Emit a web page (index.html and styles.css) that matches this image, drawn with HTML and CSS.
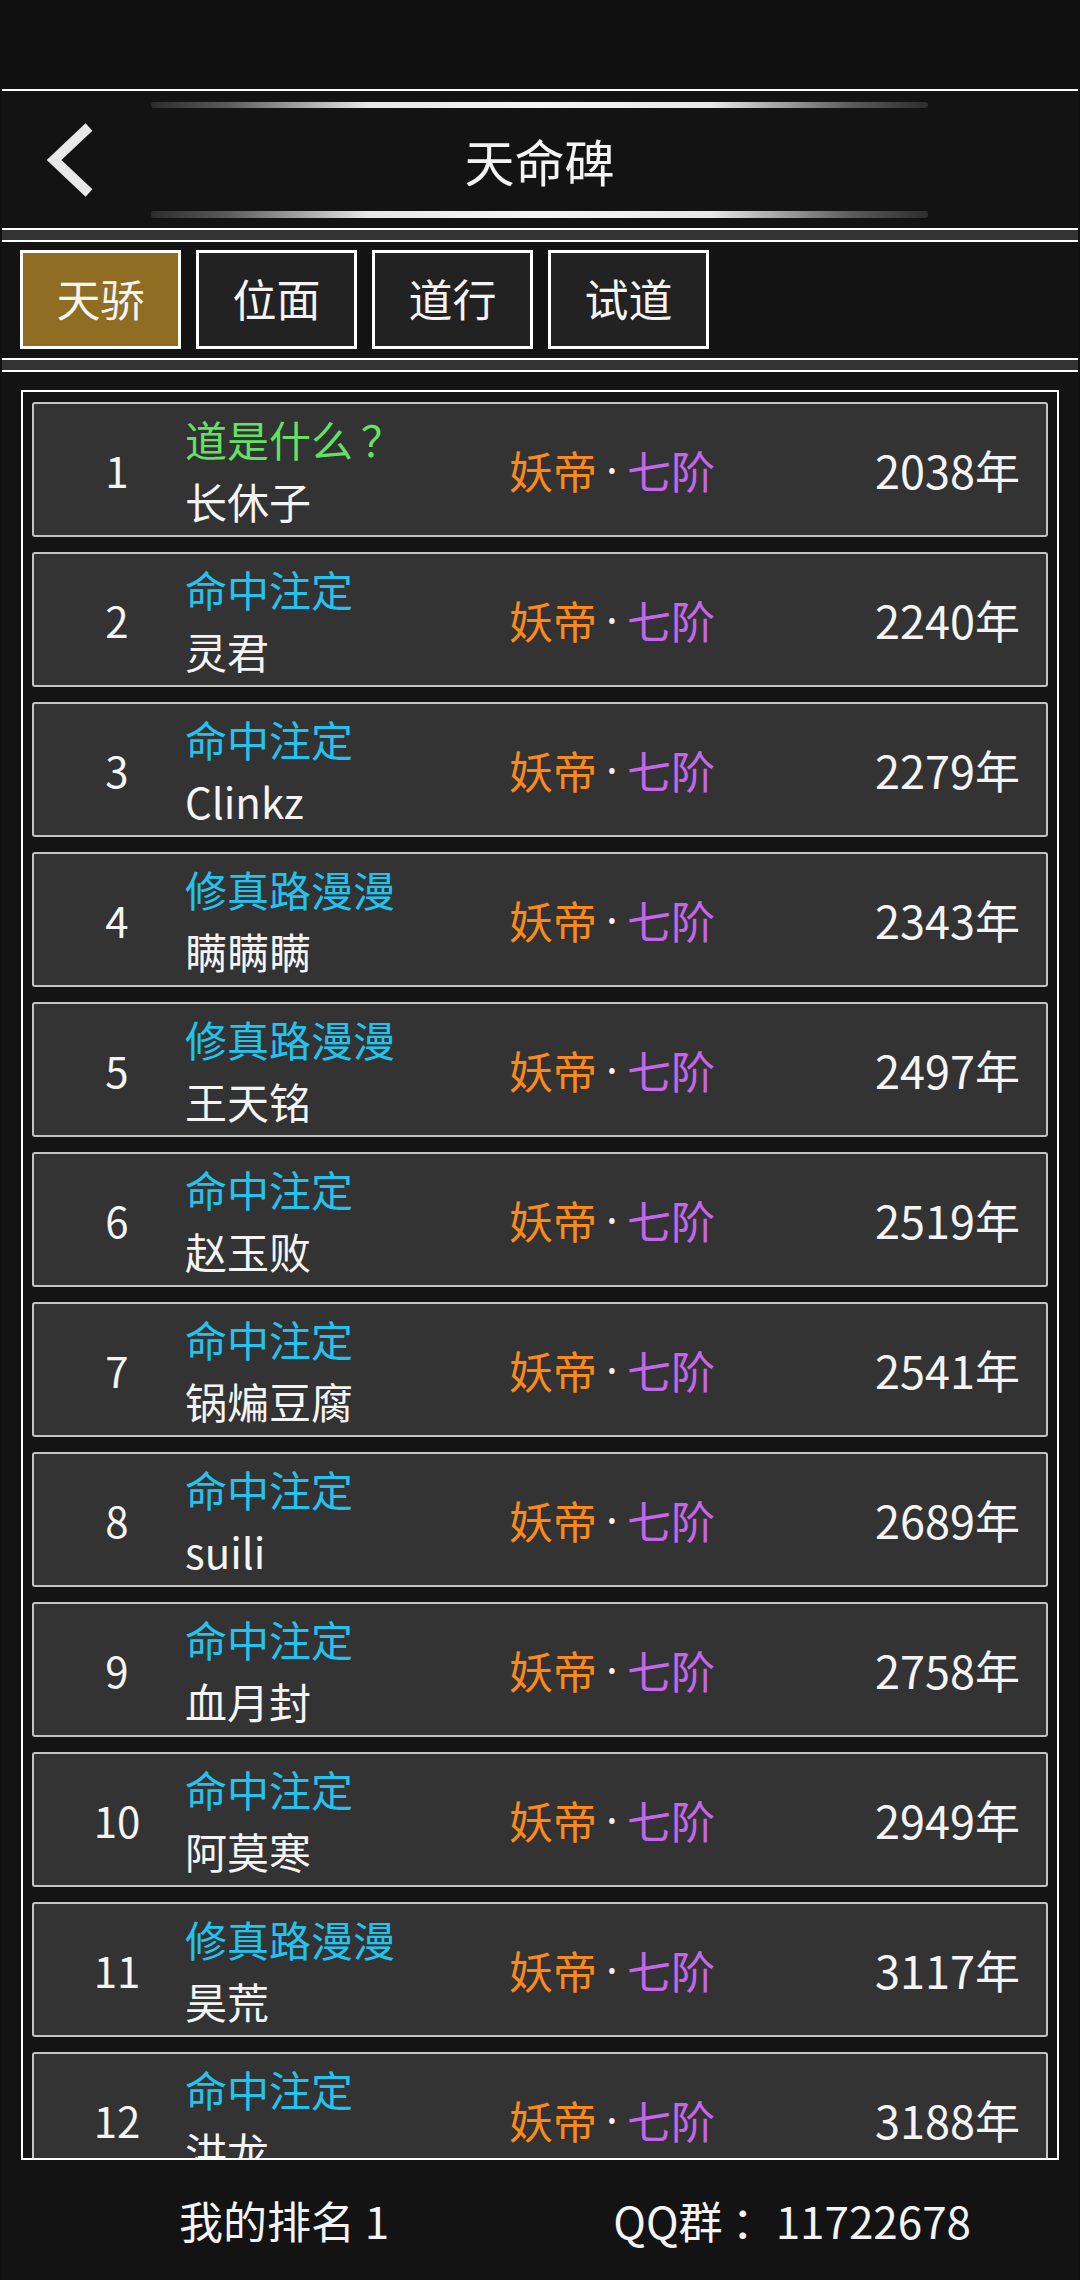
FILE: index.html
```html
<!DOCTYPE html>
<html lang="zh-CN">
<head>
<meta charset="utf-8">
<title>天命碑</title>
<link rel="stylesheet" href="styles.css">
</head>
<body>
<div class="status"></div>
<div class="app">
  <header class="header">
    <div class="back">
      <svg width="60" height="80" viewBox="0 0 60 80">
        <polyline points="49,7 14,40 49,73" fill="none" stroke="#e8e8e8" stroke-width="10" stroke-linecap="butt" stroke-linejoin="miter"/>
      </svg>
    </div>
    <div class="title-col">
      <div class="glow glow-top"></div>
      <div class="title">天命碑</div>
      <div class="glow glow-bottom"></div>
    </div>
    <div></div>
  </header>
  <div class="band"></div>
  <nav class="tabs">
    <div class="tab active">天骄</div>
    <div class="tab">位面</div>
    <div class="tab">道行</div>
    <div class="tab">试道</div>
  </nav>
  <div class="band"></div>
  <main class="main">
    <div class="list">
      <div class="row"><div class="rank">1</div><div class="names"><div class="tag green">道是什么<span class="qmark">？</span></div><div class="name">长休子</div></div><div class="realm"><span class="orange">妖帝</span><span class="dot">·</span><span class="purple">七阶</span></div><div class="year">2038年</div></div>
      <div class="row"><div class="rank">2</div><div class="names"><div class="tag cyan">命中注定</div><div class="name">灵君</div></div><div class="realm"><span class="orange">妖帝</span><span class="dot">·</span><span class="purple">七阶</span></div><div class="year">2240年</div></div>
      <div class="row"><div class="rank">3</div><div class="names"><div class="tag cyan">命中注定</div><div class="name">Clinkz</div></div><div class="realm"><span class="orange">妖帝</span><span class="dot">·</span><span class="purple">七阶</span></div><div class="year">2279年</div></div>
      <div class="row"><div class="rank">4</div><div class="names"><div class="tag cyan">修真路漫漫</div><div class="name">瞒瞒瞒</div></div><div class="realm"><span class="orange">妖帝</span><span class="dot">·</span><span class="purple">七阶</span></div><div class="year">2343年</div></div>
      <div class="row"><div class="rank">5</div><div class="names"><div class="tag cyan">修真路漫漫</div><div class="name">王天铭</div></div><div class="realm"><span class="orange">妖帝</span><span class="dot">·</span><span class="purple">七阶</span></div><div class="year">2497年</div></div>
      <div class="row"><div class="rank">6</div><div class="names"><div class="tag cyan">命中注定</div><div class="name">赵玉败</div></div><div class="realm"><span class="orange">妖帝</span><span class="dot">·</span><span class="purple">七阶</span></div><div class="year">2519年</div></div>
      <div class="row"><div class="rank">7</div><div class="names"><div class="tag cyan">命中注定</div><div class="name">锅煸豆腐</div></div><div class="realm"><span class="orange">妖帝</span><span class="dot">·</span><span class="purple">七阶</span></div><div class="year">2541年</div></div>
      <div class="row"><div class="rank">8</div><div class="names"><div class="tag cyan">命中注定</div><div class="name">suili</div></div><div class="realm"><span class="orange">妖帝</span><span class="dot">·</span><span class="purple">七阶</span></div><div class="year">2689年</div></div>
      <div class="row"><div class="rank">9</div><div class="names"><div class="tag cyan">命中注定</div><div class="name">血月封</div></div><div class="realm"><span class="orange">妖帝</span><span class="dot">·</span><span class="purple">七阶</span></div><div class="year">2758年</div></div>
      <div class="row"><div class="rank">10</div><div class="names"><div class="tag cyan">命中注定</div><div class="name">阿莫寒</div></div><div class="realm"><span class="orange">妖帝</span><span class="dot">·</span><span class="purple">七阶</span></div><div class="year">2949年</div></div>
      <div class="row"><div class="rank">11</div><div class="names"><div class="tag cyan">修真路漫漫</div><div class="name">昊荒</div></div><div class="realm"><span class="orange">妖帝</span><span class="dot">·</span><span class="purple">七阶</span></div><div class="year">3117年</div></div>
      <div class="row"><div class="rank">12</div><div class="names"><div class="tag cyan">命中注定</div><div class="name">洪龙</div></div><div class="realm"><span class="orange">妖帝</span><span class="dot">·</span><span class="purple">七阶</span></div><div class="year">3188年</div></div>
    </div>
    <footer class="footer">
      <div class="my-rank">我的排名 1</div>
      <div class="qq">QQ群<span class="colon">：</span>11722678</div>
    </footer>
  </main>
</div>
</body>
</html>
```

FILE: styles.css
```css
* {
  box-sizing: border-box;
}

html, body {
  margin: 0;
  padding: 0;
  width: 1080px;
  height: 2280px;
  overflow: hidden;
  background: #0f0f0f;
  font-family: "Noto Sans CJK SC", "Noto Sans", sans-serif;
  color: #f4f4f4;
}

.status {
  height: 89px;
  background: #101010;
}

.app {
  margin: 0 2px;
  background: #131313;
}

.header {
  display: grid;
  grid-template-columns: 149px 777px 1fr;
  height: 141px;
  border-top: 2px solid #ffffff;
  border-bottom: 2px solid #ffffff;
  background: #131313;
}

.back {
  display: flex;
  align-items: center;
  padding-left: 38px;
}

.back svg {
  display: block;
}

.title-col {
  display: flex;
  flex-direction: column;
  justify-content: space-between;
  padding: 11px 0 10px;
}

.glow {
  height: 6px;
  border-radius: 3px;
  background: linear-gradient(to right,
    rgba(70, 70, 70, 0.5) 0%,
    rgba(110, 110, 110, 0.8) 10%,
    #e8e8e8 28%,
    #f4f4f4 50%,
    #e8e8e8 72%,
    rgba(110, 110, 110, 0.8) 90%,
    rgba(70, 70, 70, 0.5) 100%);
}

.glow-bottom {
  height: 7px;
}

.title {
  text-align: center;
  font-size: 50px;
  line-height: 60px;
  color: #f4f4f4;
}

.band {
  height: 10px;
  background: #333333;
}

.tabs {
  display: flex;
  gap: 15px;
  padding: 8px 0 9px 18px;
  border-top: 2px solid #ffffff;
  border-bottom: 2px solid #ffffff;
  background: #131313;
}

.tab {
  width: 161px;
  height: 99px;
  border: 3px solid #ffffff;
  background: #222222;
  display: flex;
  align-items: center;
  justify-content: center;
  padding-bottom: 3px;
  font-size: 44px;
  color: #f4f4f4;
}

.tab.active {
  background: #8f6d22;
}

.main {
  border-top: 2px solid #ffffff;
  padding: 18px 19px 0;
  background: #131313;
}

.list {
  height: 1770px;
  border: 2px solid #ffffff;
  padding: 10px 9px 0;
  overflow: hidden;
  background: #141414;
}

.row {
  display: flex;
  align-items: center;
  height: 135px;
  margin-bottom: 15px;
  border: 2px solid #c4c4c4;
  border-radius: 3px;
  background: #333333;
  padding-right: 26px;
}

.rank {
  width: 151px;
  padding-left: 15px;
  text-align: center;
  font-size: 42px;
  color: #f4f4f4;
}

.names {
  width: 324px;
  font-size: 42px;
  line-height: 62px;
}

.name {
  color: #f4f4f4;
}

.green {
  color: #62e262;
}

.cyan {
  color: #22c4ee;
}

.qmark {
  padding-left: 8px;
}

.colon {
  padding-left: 9px;
}

.realm {
  font-size: 44px;
  display: flex;
  align-items: center;
}

.orange {
  color: #fb8a1c;
}

.purple {
  color: #c466ec;
}

.dot {
  display: inline-block;
  width: 30px;
  text-align: center;
  color: #f4f4f4;
  font-family: "Noto Sans", sans-serif;
}

.year {
  margin-left: auto;
  font-size: 45px;
  color: #f4f4f4;
}

.footer {
  display: flex;
  align-items: center;
  height: 120px;
  margin: 0 -19px;
  padding: 0 107px 0 177px;
  font-size: 44px;
  color: #f4f4f4;
}

.qq {
  margin-left: auto;
}
```
